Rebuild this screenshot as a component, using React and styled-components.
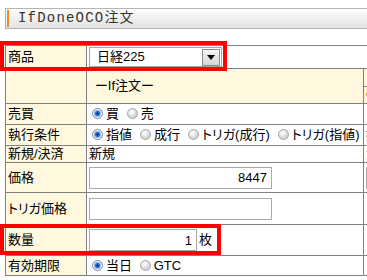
import React from 'react';
import styled, { createGlobalStyle } from 'styled-components';

const Global = createGlobalStyle`
  html, body { margin: 0; padding: 0; background: #fff; overflow: hidden; }
  body {
    font-family: "Liberation Sans", "Noto Sans CJK JP", sans-serif;
    font-size: 13px;
    color: #000;
    font-feature-settings: "palt";
  }
`;

const Page = styled.div`
  position: relative;
  width: 367px;
  height: 280px;
  overflow: hidden;
  padding: 8px 0 0 5px;
  box-sizing: border-box;
`;

const TitleBar = styled.div`
  display: flex;
  align-items: center;
  height: 21px;
  box-sizing: border-box;
  border: 1px solid #b4b4b4;
  border-right: none;
  background: linear-gradient(#fdfdfd, #e2e2e2);
  padding-left: 1px;
  width: 400px;
`;

const Accent = styled.span`
  width: 2px;
  height: 17px;
  background: #f0892a;
  margin-right: 9px;
`;

const TitleText = styled.span`
  font-family: "Liberation Mono", "Noto Sans CJK JP", monospace;
  font-size: 14px;
  letter-spacing: 1.2px;
  color: #35352a;
  line-height: 19px;
  font-feature-settings: normal;
`;

const Table = styled.table`
  border-collapse: collapse;
  table-layout: fixed;
  width: 508px;
  margin-top: 16px;
  font-size: 13px;
`;

const Row = styled.tr`
  height: ${p => p.$h}px;
`;

const Cell = styled.td`
  border: 1px solid #808080;
  padding: 0 0 0 ${p => (p.$pl ?? 2)}px;
  background: ${p => (p.$cream ? '#fff8de' : '#fff')};
  vertical-align: middle;
  white-space: nowrap;
  overflow: hidden;
  line-height: 16px;
`;

const SubHead = styled.div`
  display: flex;
  flex-direction: column;
  height: 34px;
`;

const SubPart = styled.div`
  flex: ${p => p.$grow};
  border-top: ${p => (p.$line ? '1px solid #808080' : 'none')};
  padding-left: 2px;
  display: flex;
  align-items: center;
`;

const HeadText = styled.span`
  padding-left: 6px;
`;

const Radio = styled.span`
  display: inline-block;
  width: 11px;
  height: 11px;
  box-sizing: border-box;
  border-radius: 50%;
  border: 1px solid ${p => (p.$on ? '#7d8a99' : '#a9a9a9')};
  background: ${p =>
    p.$on
      ? 'radial-gradient(circle at 50% 50%, #0d2f78 0, #1d5fcf 1.6px, #5c9ae6 2.8px, #a9cdf3 3.4px, #ffffff 3.9px, #dedede 5px)'
      : 'radial-gradient(circle at 40% 35%, #ffffff 0, #ececec 2.5px, #d2d2d2 5px)'};
  vertical-align: -1px;
  margin: 0 3px 0 4px;
`;

const Opt = styled.span`
  margin-right: 4px;
`;

const SelectBox = styled.div`
  display: inline-flex;
  align-items: center;
  justify-content: space-between;
  width: 133px;
  height: 20px;
  box-sizing: border-box;
  border: 1px solid #a5a5a5;
  background: #fff;
  padding: 0 1px 0 7px;
  vertical-align: middle;
`;

const DropBtn = styled.span`
  display: flex;
  align-items: center;
  justify-content: center;
  width: 18px;
  height: 17px;
  box-sizing: border-box;
  border: 1px solid #8c8c8c;
  background: linear-gradient(#f6f6f6, #d6d6d6);
`;

const TextBox = styled.input`
  width: ${p => p.$w}px;
  height: 22px;
  box-sizing: border-box;
  border: 1px solid #a9a9a9;
  margin: 0;
  padding: 0 4px;
  text-align: right;
  font-family: "Liberation Sans", "Noto Sans CJK JP", sans-serif;
  font-size: 13px;
  color: #000;
  background: #fff;
  outline: none;
  vertical-align: middle;
`;

const Unit = styled.span`
  margin-left: 2px;
  vertical-align: middle;
`;

const Highlight = styled.div`
  position: absolute;
  left: ${p => p.$x}px;
  top: ${p => p.$y}px;
  width: ${p => p.$w}px;
  height: ${p => p.$h}px;
  box-sizing: border-box;
  border: 4px solid #ff0000;
  pointer-events: none;
`;

export default function App() {
  return (
    <>
      <Global />
      <Page>
        <TitleBar>
          <Accent />
          <TitleText>IfDoneOCO注文</TitleText>
        </TitleBar>
        <Table>
          <colgroup>
            <col style={{ width: 81 }} />
            <col style={{ width: 277 }} />
            <col style={{ width: 150 }} />
          </colgroup>
          <tbody>
            <Row $h={23}>
              <Cell $cream>商品</Cell>
              <Cell colSpan={2}>
                <SelectBox>
                  <span>日経225</span>
                  <DropBtn>
                    <svg width="8" height="5" viewBox="0 0 8 5">
                      <path d="M0 0h8L4 5z" fill="#000" />
                    </svg>
                  </DropBtn>
                </SelectBox>
              </Cell>
            </Row>
            <Row $h={35}>
              <Cell $cream />
              <Cell $cream><HeadText>ーIf注文ー</HeadText></Cell>
              <Cell $cream $pl={0}>
                <SubHead>
                  <SubPart $grow={18}>ーDone注文ー</SubPart>
                  <SubPart $grow={16} $line>OCO1</SubPart>
                </SubHead>
              </Cell>
            </Row>
            <Row $h={21}>
              <Cell $cream>売買</Cell>
              <Cell $pl={1}>
                <Radio $on />買 <Radio />売
              </Cell>
              <Cell $pl={0}>
                <Radio $on />買 <Radio />売
              </Cell>
            </Row>
            <Row $h={21}>
              <Cell $cream>執行条件</Cell>
              <Cell $pl={1}>
                <Radio $on /><Opt>指値</Opt><Radio /><Opt>成行</Opt><Radio /><Opt>トリガ(成行)</Opt><Radio />トリガ(指値)
              </Cell>
              <Cell>指値</Cell>
            </Row>
            <Row $h={17}>
              <Cell $cream>新規/決済</Cell>
              <Cell>新規</Cell>
              <Cell>決済</Cell>
            </Row>
            <Row $h={30}>
              <Cell $cream>価格</Cell>
              <Cell><TextBox $w={183} readOnly value="8447" /></Cell>
              <Cell><TextBox $w={120} readOnly value="" /></Cell>
            </Row>
            <Row $h={32}>
              <Cell $cream>トリガ価格</Cell>
              <Cell><TextBox $w={183} readOnly value="" /></Cell>
              <Cell />
            </Row>
            <Row $h={31}>
              <Cell $cream>数量</Cell>
              <Cell><TextBox $w={108} readOnly value="1" /><Unit>枚</Unit></Cell>
              <Cell />
            </Row>
            <Row $h={20}>
              <Cell $cream>有効期限</Cell>
              <Cell $pl={1}>
                <Radio $on />当日 <Radio />GTC
              </Cell>
              <Cell $pl={0}>
                <Radio $on />当日
              </Cell>
            </Row>
          </tbody>
        </Table>
        <Highlight $x={0} $y={41} $w={227} $h={30} />
        <Highlight $x={0} $y={224} $w={221} $h={31} />
      </Page>
    </>
  );
}
